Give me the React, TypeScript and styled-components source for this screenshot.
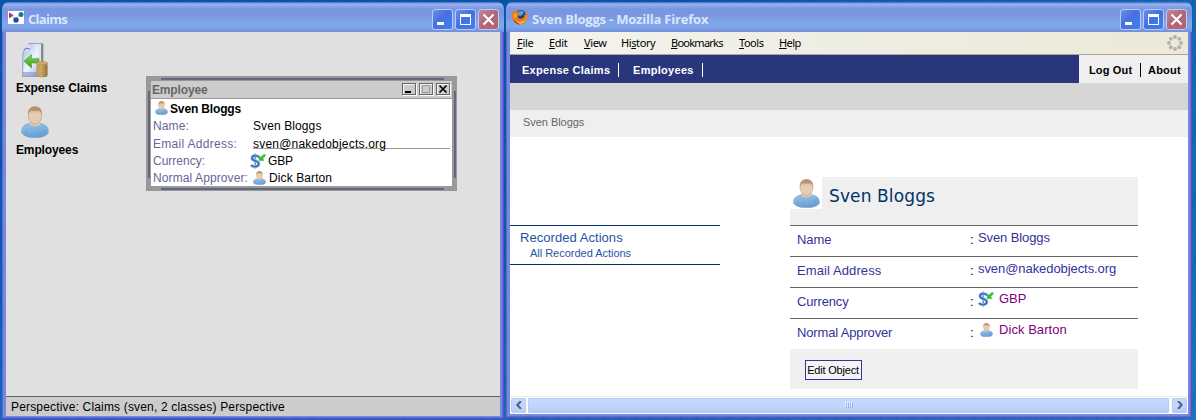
import React from "react";
import styled, { createGlobalStyle, css } from "styled-components";

const sans = `"Liberation Sans", Arial, sans-serif`;

const GlobalStyle = createGlobalStyle`
  *, *::before, *::after { box-sizing: border-box; }
  html, body { margin: 0; padding: 0; overflow: hidden; }
  body { font-family: ${sans}; font-size: 12px; color: #000; white-space: nowrap; }
  svg { display: block; flex: none; }
`;

const Desktop = styled.div`
  position: relative;
  width: 1196px;
  height: 420px;
  overflow: hidden;
  background:
    repeating-linear-gradient(103deg, rgba(40, 130, 200, 0.12) 0 2px, transparent 2px 7px, rgba(0, 40, 120, 0.08) 7px 9px, transparent 9px 15px),
    linear-gradient(90deg, transparent 55%, rgba(60, 150, 215, 0.25) 100%),
    linear-gradient(180deg, #0754a4 0, #0b58b0 55%, #0e62b8 85%, #1767b8 100%);
`;

/* ---------- XP style window ---------- */

const Frame = styled.section<{ $x: number; $w: number; $h: number }>`
  position: absolute;
  top: 2px;
  left: ${(p) => p.$x}px;
  width: ${(p) => p.$w}px;
  height: ${(p) => p.$h}px;
  display: flex;
  flex-direction: column;
  border-radius: 7px 7px 0 0;
  overflow: hidden;
  padding: 0 4px 4px;
  background: #7589dd;
  box-shadow: inset 1px 0 #5e62cd, inset -1px -1px #5652c6, inset -2px -2px #6669d2;
`;

const TitleBar = styled.header`
  flex: none;
  height: 30px;
  margin: 0 -4px;
  padding: 0 5px 0 6px;
  display: flex;
  align-items: center;
  background: linear-gradient(180deg, #5c7bd2 0, #5c7bd2 1px, #9bb9f1 2px, #89a5e8 4px, #7a96e0 7px, #7b97e1 14px, #80a5e9 20px, #80a6ea 25px, #7b97e1 28px, #768edd 30px);
`;

const TitleText = styled.h1<{ $ls: number }>`
  flex: 1;
  margin: 4px 0 0 4px;
  font: bold 13px/18px "Open Sans", "Noto Sans", sans-serif;
  letter-spacing: ${(p) => p.$ls}px;
  color: #dbe5fb;
`;

const TitleButton = styled.span<{ $close?: boolean }>`
  width: 21px;
  height: 21px;
  margin: 4px 0 0 2px;
  display: grid;
  place-items: center;
  border: 1px solid #b8cbf6;
  border-radius: 3px;
  background: ${(p) =>
    p.$close
      ? "linear-gradient(135deg, #c08796 0, #b26878 50%, #b8606c 100%)"
      : "linear-gradient(135deg, #6a90ec 0, #4470e2 45%, #4280f0 100%)"};
`;

function WindowButtons() {
  return (
    <>
      <TitleButton>
        <svg width="19" height="19"><path d="M4 12h7v3H4z" fill="#fff" /></svg>
      </TitleButton>
      <TitleButton>
        <svg width="19" height="19"><path d="M4 4h11v11H4zM5 7v7h9V7z" fill="#fff" fillRule="evenodd" /></svg>
      </TitleButton>
      <TitleButton $close>
        <svg width="19" height="19"><path d="M4.5 4.5l10 10M14.5 4.5l-10 10" stroke="#fff" strokeWidth="2.2" /></svg>
      </TitleButton>
    </>
  );
}

/* ---------- icons ---------- */

function PersonIcon({ w, h }: { w: number; h: number }) {
  return (
    <svg width={w} height={h} viewBox="0 0 28 30" preserveAspectRatio="none">
      <defs>
        <linearGradient id="shirt" x1="0" y1="0" x2="0.3" y2="1">
          <stop offset="0" stopColor="#9cc6ea" />
          <stop offset="0.6" stopColor="#7db0e0" />
          <stop offset="1" stopColor="#6a9dd2" />
        </linearGradient>
        <linearGradient id="face" x1="0" y1="0" x2="0" y2="1">
          <stop offset="0" stopColor="#cfae90" />
          <stop offset="0.45" stopColor="#e6cdb5" />
          <stop offset="1" stopColor="#e4ccb2" />
        </linearGradient>
      </defs>
      <path d="M.7 25C.7 20 2.500 18 6.500 17L10 15.500H18L21.500 17C25.500 18 27.300 20 27.300 25 25.500 28.300 20 29.600 14 29.600S2.500 28.300 .7 25z" fill="url(#shirt)" stroke="#7a9fc8" strokeWidth=".7" />
      <path d="M9.500 14L8.500 16.800C11 19.600 17 19.600 19.500 16.800L18.500 14z" fill="#e2c9b0" />
      <path d="M5 22v5.300M23 22v5.300" stroke="#6b9bce" strokeWidth=".8" />
      <path d="M7.300 8.500C7.300 3 10 .6 14 .6S20.700 3 20.700 8.500C20.700 13 18 17 14 17S7.300 13 7.300 8.500z" fill="url(#face)" stroke="#bd9c7d" strokeWidth=".6" />
      <path d="M7.200 8.500C6.700 3 9.700 .4 14 .4S21.300 3 20.800 8.500C20.300 6.300 19.500 5 17.500 4.400 14.500 4.900 12.500 4.900 10.500 4.400 8.500 5 7.700 6.300 7.200 8.500z" fill="#b8916f" />
    </svg>
  );
}

function ClaimIcon() {
  return (
    <svg width="27" height="35" viewBox="0 0 27 35">
      <defs>
        <linearGradient id="page" x1="0" y1="0" x2="1" y2="1">
          <stop offset="0" stopColor="#9db4e8" />
          <stop offset="0.5" stopColor="#f1f5ff" />
          <stop offset="1" stopColor="#8fa1d0" />
        </linearGradient>
        <linearGradient id="coin" x1="0" y1="0" x2="1" y2="0">
          <stop offset="0" stopColor="#c9a35c" />
          <stop offset="0.4" stopColor="#d9b873" />
          <stop offset="1" stopColor="#94702f" />
        </linearGradient>
        <linearGradient id="arrow" x1="0" y1="0" x2="0" y2="1">
          <stop offset="0" stopColor="#8adb55" />
          <stop offset="1" stopColor="#369918" />
        </linearGradient>
      </defs>
      <path d="M8 .5h14V31l-5 2.500H1.500L2 10z" fill="url(#page)" stroke="#8190b8" strokeWidth=".8" />
      <path d="M2 29h15v4H1.500z" fill="#7f92cc" opacity=".6" />
      <path d="M20 1h2V31l-2 1z" fill="#83888f" />
      <path d="M17.500 2l2.500-1v31l-2.500 1z" fill="#dfe4ef" />
      <path d="M8 .5l1 5.500L2 9.500z" fill="#dce7fd" />
      <path d="M2.500 8C4 5.500 6.500 5 9 6" fill="none" stroke="#6f87c4" strokeWidth="1.200" />
      <path d="M3 18l7.500-6.500v4.200H18v4.300h-7.500V25z" fill="url(#arrow)" stroke="#4b9a2d" strokeWidth=".6" />
      <path d="M15.500 20.500v12c1 2 10 2 11 0v-12z" fill="url(#coin)" />
      <ellipse cx="21" cy="20.300" rx="5.500" ry="1.700" fill="#cfae6a" stroke="#a6803d" strokeWidth=".6" />
      <path d="M15.500 23c1 1.500 10 1.500 11 0M15.500 25.500c1 1.500 10 1.500 11 0M15.500 28c1 1.500 10 1.500 11 0M15.500 30.500c1 1.500 10 1.500 11 0M15.500 32.600c1 1.500 10 1.500 11 0" fill="none" stroke="#9c7a3e" strokeWidth=".6" />
    </svg>
  );
}

function CurrencyIcon() {
  return (
    <svg width="16" height="16" viewBox="0 0 16 16">
      <path d="M5.200 .5v15" stroke="#5f86cf" strokeWidth="1.500" />
      <path d="M9 4.500C7.500 2 2 2 2 5.200 2 8.300 8.800 7.300 8.800 10.800 8.800 14.300 2.800 14.300 1 12" fill="none" stroke="#b5cdf3" strokeWidth="3.200" />
      <path d="M9 4.500C7.500 2 2 2 2 5.200 2 8.300 8.800 7.300 8.800 10.800 8.800 14.300 2.800 14.300 1 12" fill="none" stroke="#3c69c0" strokeWidth="1.800" />
      <path d="M9 2.600l1.800 1.500L14.300 1l1.500 1.500-2.800 2.900 1 2.300L9 7.800z" fill="#2fbd3b" stroke="#5fcf66" strokeWidth=".5" />
    </svg>
  );
}

function AppIcon() {
  return (
    <svg width="16" height="13" viewBox="0 0 16 13">
      <rect width="16" height="13" fill="#fff" />
      <path d="M1 1.500l4.800 2.800L1 7.200z" fill="#a52d72" />
      <path d="M4 4.500l3 4 4.500-4.500" fill="none" stroke="#b3bbd9" />
      <circle cx="8" cy="9" r="2.700" fill="#274a9d" />
      <circle cx="13" cy="3.600" r="2.500" fill="#168087" />
    </svg>
  );
}

function FirefoxIcon() {
  return (
    <svg width="16" height="16" viewBox="0 0 16 16">
      <circle cx="8.500" cy="7.300" r="6.300" fill="#1d3f83" />
      <path d="M6 2.500c2-1.500 5-1 6 1l-2 3-3 .5z" fill="#4fa0dc" />
      <path d="M.8 2.200C1.500 3 2.300 3 3.200 3 4 1.500 5 1 6 1 5.300 2 5.500 3 6 3.800L8 4.500C8 5.500 6.500 6 6 7 6 9.500 8 10.300 10 9.500 12 9 12.500 7 12 5.500L13.300 6.500C13.500 4.500 13 3 12 1.800 14.800 3 15.800 5.500 15.600 8.500 15 13 12 15.500 8 15.500 3.500 15.300.4 12 .3 8 .2 5.500.4 4 .8 2.200z" fill="#e77b17" />
      <path d="M14.200 5C15 10 12.500 13 8.500 13 5 13 2.500 11 2 8 2.500 13 6 15 9 14.500 13 14 15.500 10 14.200 5z" fill="#fbca3a" />
      <path d="M1.300 5C2.500 4 4.500 4.500 5 5.500L4 8.500 2 9z" fill="#f6a42c" />
      <path d="M1 10C2 13.500 5 15.500 8 15.500L5.500 13.500z" fill="#bb3d17" />
    </svg>
  );
}

function Throbber() {
  const dots = [[8, 2], [12.200, 3.800], [14, 8], [12.200, 12.200], [8, 14], [3.800, 12.200], [2, 8], [3.800, 3.800]];
  return (
    <svg width="16" height="16" viewBox="0 0 16 16">
      {dots.map(([x, y]) => <circle key={`${x}-${y}`} cx={x} cy={y} r="1.900" fill="#b1b0ae" />)}
    </svg>
  );
}

/* ---------- left: desktop client ---------- */

const ClientArea = styled.div`
  position: relative;
  flex: 1;
  min-height: 0;
  padding: 11px 0 0 10px;
  background: #e0e0e0;
`;

const Shortcut = styled.div<{ $h: number }>`
  height: ${(p) => p.$h}px;
  padding-left: 5px;
`;

const ShortcutLabel = styled.div<{ $ls: number; $top: number }>`
  margin: ${(p) => p.$top}px 0 0 -5px;
  font: bold 12px/16px ${sans};
  letter-spacing: ${(p) => p.$ls}px;
`;

const StatusBar = styled.footer`
  flex: none;
  height: 20px;
  margin-bottom: -1px;
  padding-left: 5px;
  border-top: 1px solid #666;
  background: #ccc;
  font-size: 12px;
  line-height: 20px;
  letter-spacing: 0.17px;
`;

const InnerFrame = styled.div`
  position: absolute;
  left: 140px;
  top: 44px;
  width: 311px;
  height: 115px;
  border: 5px solid #999;
  background: #fff;
`;

const Edge = styled.i<{ $side: "top" | "bottom" | "left" | "right" }>`
  position: absolute;
  background: #666;
  ${(p) =>
    p.$side === "top" || p.$side === "bottom"
      ? css`left: 10px; right: 8px; height: 2px; ${p.$side}: ${p.$side === "top" ? "-3px" : "-4px"}; border-bottom: 1px solid #666699;`
      : css`top: 10px; bottom: 8px; width: 2px; ${p.$side}: ${p.$side === "left" ? "-3px" : "-4px"}; border-right: 1px solid #666699;`}
`;

const InnerTitle = styled.div`
  height: 18px;
  padding: 2px 2px 0 1px;
  display: flex;
  border-bottom: 1px solid #999;
  background: #ccc;
  color: #666;
  font: bold 12px/15px ${sans};
  letter-spacing: -0.15px;
`;

const InnerCaption = styled.span`
  flex: 1;
`;

const InnerButton = styled.span`
  width: 14px;
  height: 12px;
  margin-left: 3px;
  border: 1px solid #666;
  background: #ccc;
  box-shadow: inset 1px 1px #f5f5f5, 1px 1px #fff;
`;

const InnerRow = styled.div<{ $h: number }>`
  display: flex;
  align-items: center;
  height: ${(p) => p.$h}px;
  padding-left: 2px;
`;

const InnerHeading = styled.strong`
  margin: 2px 0 0 2px;
  letter-spacing: -0.15px;
`;

const InnerLabel = styled.span<{ $ls?: number; $w?: number }>`
  width: ${(p) => p.$w ?? 100}px;
  color: #666699;
  letter-spacing: ${(p) => p.$ls ?? 0.1}px;
`;

const InnerValue = styled.span<{ $ls?: number; $gap?: number }>`
  margin-left: ${(p) => p.$gap ?? 0}px;
  letter-spacing: ${(p) => p.$ls ?? 0.1}px;
`;

const EditValue = styled.span`
  width: 197px;
  height: 13px;
  margin-top: -3px;
  line-height: 17px;
  border-bottom: 1px solid #999;
  letter-spacing: 0.2px;
`;

function EmployeeFrame() {
  return (
    <InnerFrame>
      <Edge $side="top" /><Edge $side="bottom" /><Edge $side="left" /><Edge $side="right" />
      <InnerTitle>
        <InnerCaption>Employee</InnerCaption>
        <InnerButton><svg width="12" height="10"><path d="M2 7h6v2H2z" /></svg></InnerButton>
        <InnerButton><svg width="12" height="10"><path d="M2.500 1.500h7v7h-7z" fill="none" stroke="#999" /></svg></InnerButton>
        <InnerButton><svg width="12" height="10"><path d="M2.500 1.500l7 7M9.500 1.500l-7 7" stroke="#000" strokeWidth="1.700" /></svg></InnerButton>
      </InnerTitle>
      <InnerRow $h={18}>
        <InnerValue $gap={2}><PersonIcon w={13} h={14} /></InnerValue>
        <InnerHeading>Sven Bloggs</InnerHeading>
      </InnerRow>
      <InnerRow $h={18}><InnerLabel>Name:</InnerLabel><InnerValue>Sven Bloggs</InnerValue></InnerRow>
      <InnerRow $h={17}><InnerLabel $ls={0.3}>Email Address:</InnerLabel><EditValue>sven@nakedobjects.org</EditValue></InnerRow>
      <InnerRow $h={17}><InnerLabel $w={97} $ls={0}>Currency:</InnerLabel><CurrencyIcon /><InnerValue $gap={2} $ls={-0.2}>GBP</InnerValue></InnerRow>
      <InnerRow $h={17}><InnerLabel>Normal Approver:</InnerLabel><PersonIcon w={13} h={14} /><InnerValue $gap={3}>Dick Barton</InnerValue></InnerRow>
    </InnerFrame>
  );
}

/* ---------- right: browser ---------- */

const MenuBar = styled.nav`
  flex: none;
  height: 23px;
  padding: 0 5px 0 7px;
  display: flex;
  align-items: center;
  border-bottom: 1px solid #aca899;
  background: linear-gradient(90deg, #f4f4ef 0, #efeee3 45%, #ece9d8 100%);
  font: 11px/15px "Noto Sans", sans-serif;
`;

const MenuItem = styled.span<{ $w: number; $ls: number }>`
  width: ${(p) => p.$w}px;
  margin-top: -1px;
  letter-spacing: ${(p) => p.$ls}px;
`;

const MenuSpring = styled.span`
  flex: 1;
`;

const NavBar = styled.div`
  flex: none;
  height: 28px;
  display: flex;
  justify-content: space-between;
  background: #29367c;
`;

const NavGroup = styled.div<{ $light?: boolean }>`
  display: flex;
  align-items: center;
  padding: 2px ${(p) => (p.$light ? 7 : 0)}px 0 ${(p) => (p.$light ? 10 : 12)}px;
  background: ${(p) => (p.$light ? "#efefef" : "transparent")};
  color: ${(p) => (p.$light ? "#000" : "#fff")};
  font: bold 11px/14px ${sans};
`;

const NavItem = styled.span<{ $w: number; $ls: number; $rule?: boolean; $gap?: number }>`
  width: ${(p) => p.$w}px;
  margin-left: ${(p) => p.$gap ?? 0}px;
  border-right: ${(p) => (p.$rule ? "1px solid currentColor" : "0")};
  letter-spacing: ${(p) => p.$ls}px;
`;

const GreyBand = styled.div`
  flex: none;
  height: 27px;
  background: #d6d6d6;
`;

const Crumbs = styled.div`
  flex: none;
  height: 27px;
  padding-left: 13px;
  background: #efefef;
  color: #666;
  font-size: 11px;
  line-height: 25px;
  letter-spacing: -0.05px;
`;

const Page = styled.main`
  flex: 1;
  min-height: 0;
  display: flex;
  gap: 70px;
  background: #fff;
`;

const Actions = styled.aside`
  width: 210px;
  height: 40px;
  margin-top: 88px;
  padding: 3px 0 0 10px;
  border: solid #003366;
  border-width: 1px 0;
  color: #1e54a5;
`;

const ActionsTitle = styled.div`
  font-size: 13px;
  line-height: 18px;
  letter-spacing: 0.05px;
`;

const ActionLink = styled.div`
  padding-left: 10px;
  font-size: 11px;
  line-height: 13px;
  letter-spacing: -0.02px;
`;

const Form = styled.article`
  width: 348px;
  margin-top: 40px;
`;

const FormHead = styled.div`
  height: 48px;
  display: flex;
  background: #efefef;
`;

const HeadIcon = styled.span`
  width: 32px;
  height: 32px;
  padding: 2px 0 0 3px;
  background: #fff;
`;

const HeadText = styled.h2`
  margin: 8px 0 0 7px;
  font: 17px/22px "DejaVu Sans", sans-serif;
  letter-spacing: 0.12px;
  color: #003366;
`;

const Field = styled.div`
  height: 31px;
  padding-left: 7px;
  display: flex;
  border-top: 1px solid #666;
  font-size: 13px;
  line-height: 16px;
  color: #333399;
`;

const FieldName = styled.span<{ $ls?: number }>`
  width: 173px;
  padding-top: 6px;
  letter-spacing: ${(p) => p.$ls ?? 0.1}px;
`;

const Colon = styled.span`
  width: 8px;
  padding-top: 6px;
  color: #000;
`;

const FieldValue = styled.span<{ $link?: boolean; $ls?: number }>`
  display: flex;
  gap: 5px;
  padding-top: ${(p) => (p.$link ? 3 : 4)}px;
  color: ${(p) => (p.$link ? "#800080" : "#333399")};
  letter-spacing: ${(p) => p.$ls ?? 0}px;
`;

const FieldIcon = styled.span`
  width: 16px;
  height: 16px;
  display: grid;
  place-items: center;
`;

const FormFoot = styled.div`
  height: 40px;
  padding: 11px 15px;
  background: #efefef;
`;

const EditButton = styled.button`
  display: block;
  width: 57px;
  height: 20px;
  padding: 0 1px 0 0;
  border: 1px solid #333399;
  background: #f4f4f4;
  color: #000;
  font: 11px/16px ${sans};
  letter-spacing: -0.2px;
`;

const ScrollBar = styled.div`
  flex: none;
  height: 18px;
  display: flex;
  align-items: center;
  gap: 1px;
  padding: 0 1px 1px;
  border-top: 1px solid #eeede5;
  background: #fcfcf9;
`;

const ScrollPart = styled.span<{ $thumb?: boolean }>`
  display: grid;
  place-items: center;
  width: 15px;
  height: 15px;
  border-radius: 2px;
  box-shadow: inset 0 0 0 1px #b7cbf8;
  background: linear-gradient(180deg, #c9d8fd, #c2d3fc 60%, #b5c8f5);
  ${(p) => p.$thumb && css`flex: 1; margin: 0 2px 0 1px;`}
`;

export default function App() {
  return (
    <>
      <GlobalStyle />
      <Desktop>
        <Frame $x={2} $w={502} $h={417}>
          <TitleBar>
            <AppIcon />
            <TitleText $ls={-0.7}>Claims</TitleText>
            <WindowButtons />
          </TitleBar>
          <ClientArea>
            <Shortcut $h={63}>
              <ClaimIcon />
              <ShortcutLabel $ls={-0.07} $top={2}>Expense Claims</ShortcutLabel>
            </Shortcut>
            <Shortcut $h={60}>
              <PersonIcon w={28} h={32} />
              <ShortcutLabel $ls={-0.13} $top={4}>Employees</ShortcutLabel>
            </Shortcut>
            <EmployeeFrame />
          </ClientArea>
          <StatusBar>Perspective: Claims (sven, 2 classes) Perspective</StatusBar>
        </Frame>

        <Frame $x={506} $w={686} $h={416}>
          <TitleBar>
            <FirefoxIcon />
            <TitleText $ls={-0.2}>Sven Bloggs - Mozilla Firefox</TitleText>
            <WindowButtons />
          </TitleBar>
          <MenuBar>
            <MenuItem $w={32} $ls={-0.3}><u>F</u>ile</MenuItem>
            <MenuItem $w={35} $ls={-0.3}><u>E</u>dit</MenuItem>
            <MenuItem $w={37} $ls={-0.35}><u>V</u>iew</MenuItem>
            <MenuItem $w={50} $ls={-0.4}>Hi<u>s</u>tory</MenuItem>
            <MenuItem $w={68} $ls={-0.75}><u>B</u>ookmarks</MenuItem>
            <MenuItem $w={40} $ls={-0.45}><u>T</u>ools</MenuItem>
            <MenuItem $w={30} $ls={-0.6}><u>H</u>elp</MenuItem>
            <MenuSpring />
            <Throbber />
          </MenuBar>
          <NavBar>
            <NavGroup>
              <NavItem $w={97} $ls={0.28} $rule>Expense Claims</NavItem>
              <NavItem $w={70} $ls={0.3} $gap={14} $rule>Employees</NavItem>
            </NavGroup>
            <NavGroup $light>
              <NavItem $w={52} $ls={0.15} $rule>Log Out</NavItem>
              <NavItem $w={33} $ls={0.2} $gap={7}>About</NavItem>
            </NavGroup>
          </NavBar>
          <GreyBand />
          <Crumbs>Sven Bloggs</Crumbs>
          <Page>
            <Actions>
              <ActionsTitle>Recorded Actions</ActionsTitle>
              <ActionLink>All Recorded Actions</ActionLink>
            </Actions>
            <Form>
              <FormHead>
                <HeadIcon><PersonIcon w={27} h={29} /></HeadIcon>
                <HeadText>Sven Bloggs</HeadText>
              </FormHead>
              <Field><FieldName $ls={-0.1}>Name</FieldName><Colon>:</Colon><FieldValue $ls={-0.1}>Sven Bloggs</FieldValue></Field>
              <Field><FieldName>Email Address</FieldName><Colon>:</Colon><FieldValue $ls={-0.07}>sven@nakedobjects.org</FieldValue></Field>
              <Field><FieldName $ls={-0.15}>Currency</FieldName><Colon>:</Colon><FieldValue $link><FieldIcon><CurrencyIcon /></FieldIcon>GBP</FieldValue></Field>
              <Field><FieldName $ls={-0.15}>Normal Approver</FieldName><Colon>:</Colon><FieldValue $link $ls={0.05}><FieldIcon><PersonIcon w={13} h={14} /></FieldIcon>Dick Barton</FieldValue></Field>
              <FormFoot><EditButton>Edit Object</EditButton></FormFoot>
            </Form>
          </Page>
          <ScrollBar>
            <ScrollPart><svg width="8" height="8"><path d="M6 0L2.300 4 6 8" fill="none" stroke="#4d6185" strokeWidth="2" /></svg></ScrollPart>
            <ScrollPart $thumb><svg width="8" height="6"><path d="M.5 0v5M2.500 0v5M4.500 0v5M6.500 0v5" stroke="#eef4fe" /><path d="M1.500 1v5M3.500 1v5M5.500 1v5M7.500 1v5" stroke="#8cb0f8" /></svg></ScrollPart>
            <ScrollPart><svg width="8" height="8"><path d="M2 0l3.700 4L2 8" fill="none" stroke="#4d6185" strokeWidth="2" /></svg></ScrollPart>
          </ScrollBar>
        </Frame>
      </Desktop>
    </>
  );
}
